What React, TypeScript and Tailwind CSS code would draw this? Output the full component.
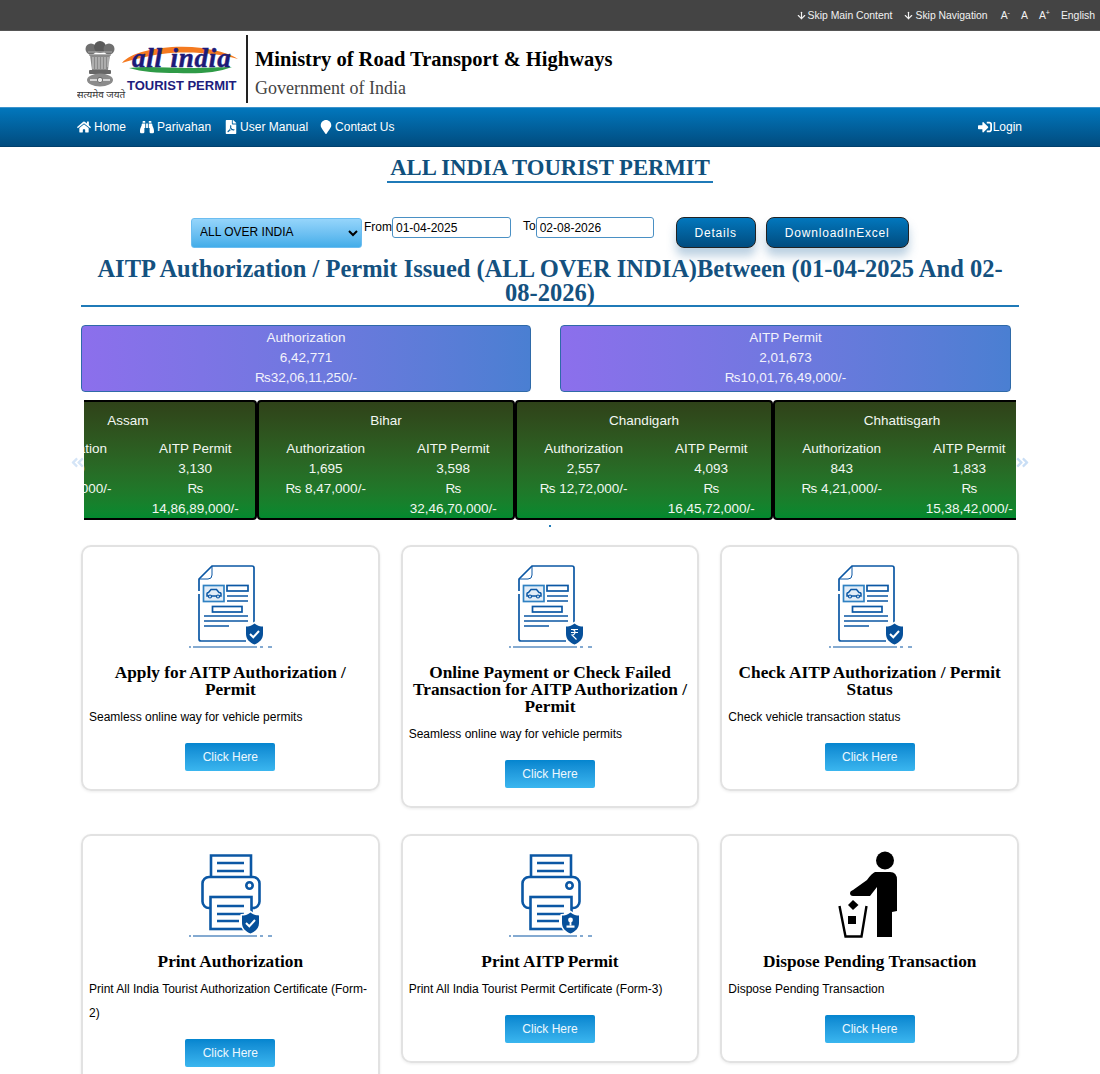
import { FaHome, FaBinoculars, FaFilePdf, FaMapMarker, FaSignInAlt, FaAngleDoubleLeft, FaAngleDoubleRight } from 'react-icons/fa';
import { ArrowDown } from 'lucide-react';

const blue = '#0b57a4';

function Baseline() {
  return (
    <g stroke={blue} strokeWidth="1.2" fill="none">
      <path d="M9 92h2M13 92h64M80 92h3M88 92h4" />
    </g>
  );
}

function Shield({ cx, cy, children }: { cx: number; cy: number; children?: React.ReactNode }) {
  return (
    <g transform={`translate(${cx} ${cy})`}>
      <path d="M0 -10.5C3 -8 6 -7.5 8.5 -7.5V0C8.5 5 5 8.5 0 10.5C-5 8.5 -8.5 5 -8.5 0V-7.5C-6 -7.5 -3 -8 0 -10.5Z" fill="#fff" stroke="#fff" strokeWidth="3" />
      <path d="M0 -10.5C3 -8 6 -7.5 8.5 -7.5V0C8.5 5 5 8.5 0 10.5C-5 8.5 -8.5 5 -8.5 0V-7.5C-6 -7.5 -3 -8 0 -10.5Z" fill="#07509a" />
      {children}
    </g>
  );
}

const Tick = () => <path d="M-4.5 0L-1.2 3.2L4.5 -3" stroke="#fff" strokeWidth="2" fill="none" />;

function DocIcon({ rupee }: { rupee?: boolean }) {
  return (
    <svg width="100" height="100" viewBox="0 0 100 100" className="block mx-auto">
      <g fill="none" stroke={blue} strokeWidth="1.7">
        <path d="M19 36V24L32 11H72Q74 11 74 13V70" />
        <path d="M19 39V84Q19 86 21 86H66" />
        <path d="M32 11V20Q32 24 28 24H19" strokeWidth="1" />
        <rect x="23.5" y="30.5" width="20.5" height="16" fill="#e4eef7" stroke="#2f81c2" strokeWidth="1.7" />
        <rect x="47" y="30.5" width="21" height="5.5" />
        <path d="M47 41h21M47 46h21" />
        <rect x="32.5" y="51.5" width="29.5" height="5.5" />
        <path d="M24 61h44M24 66h44M24 71h25" />
        <path d="M27 41V38.5Q27 37.5 28.5 37.5L31 34.5H36.5L39 37.5Q41 37.5 41 39V41H27Z" strokeWidth="1.5" />
        <circle cx="30" cy="41.5" r="1.5" fill="#e4eef7" strokeWidth="1.2" />
        <circle cx="38" cy="41.5" r="1.5" fill="#e4eef7" strokeWidth="1.2" />
      </g>
      <Shield cx={74.5} cy={79}>
        {rupee ? <path d="M-3.5 -4.5H3.5M-3.5 -1.5H3.5M-2.5 -4.5C1.5 -4.5 1.5 1 -2.5 1L2 5.5" stroke="#fff" strokeWidth="1.1" fill="none" /> : <Tick />}
      </Shield>
      <Baseline />
    </svg>
  );
}

function PrinterIcon({ badge }: { badge: 'tick' | 'stamp' }) {
  return (
    <svg width="100" height="100" viewBox="0 0 100 100" className="block mx-auto">
      <g fill="none" stroke={blue} strokeWidth="2.6">
        <path d="M31 33V11.5H71V33" />
        <path d="M37 19h27M37 27h27" />
        <rect x="22.5" y="33" width="57" height="31" rx="6.5" />
        <circle cx="69.5" cy="41.5" r="3.2" />
        <rect x="30.5" y="53" width="41" height="32" fill="#fff" />
        <path d="M37 62h27M37 70h27M37 77h22" />
      </g>
      <Shield cx={70.5} cy={79}>
        {badge === 'tick' ? (
          <Tick />
        ) : (
          <g fill="#fff">
            <circle cx="0" cy="-3" r="2.4" />
            <rect x="-0.9" y="-2" width="1.8" height="4.5" />
            <rect x="-4" y="2.5" width="8" height="2.2" />
          </g>
        )}
      </Shield>
      <Baseline />
    </svg>
  );
}

function DisposeIcon() {
  return (
    <svg width="100" height="100" viewBox="0 0 100 100" className="block mx-auto">
      <circle cx="65" cy="16.5" r="9" fill="#000" />
      <path d="M55 28H70Q77 28 77 36V67L72 68V93H57V43L50 52H33Q30 52 30 49Q30 47 33 46L47 36Q52 29 55 28Z" fill="#000" />
      <path d="M33 56L38.5 61L33 66L28 61Z" fill="#000" />
      <rect x="28" y="72" width="8" height="8" fill="#000" />
      <path d="M19.5 62L25.5 92.5H41.5L46.5 62" fill="none" stroke="#000" strokeWidth="2.4" />
    </svg>
  );
}

function Logo() {
  return (
    <svg width="169" height="72" viewBox="0 0 169 72" className="block shrink-0">
      <g fill="#6f6f6f">
        <circle cx="14" cy="16" r="5.5" />
        <circle cx="23" cy="14" r="6" fill="#5a5a5a" />
        <circle cx="32" cy="16" r="5.5" />
        <path d="M11 19h24M12 22h22" stroke="#999" strokeWidth="1.5" />
        <path d="M13 22H33L31 37H15Z" fill="#8a8a8a" />
        <path d="M16 24v12M19 24v12M22 24v12M25 24v12M28 24v12M31 24v10" stroke="#d8d8d8" strokeWidth="0.9" />
        <rect x="12" y="37" width="22" height="4" rx="1" fill="#666" />
        <ellipse cx="23" cy="47" rx="13" ry="6.5" fill="#8b8b8b" />
        <path d="M13 47h7M26 47h7" stroke="#eee" strokeWidth="1.5" />
        <circle cx="23" cy="47" r="2.6" fill="#eee" stroke="#555" strokeWidth="0.8" />
      </g>
      <text x="24" y="65" textAnchor="middle" fontSize="10" fill="#333" fontFamily="'Noto Sans','DejaVu Sans',sans-serif">सत्यमेव जयते</text>
      <path d="M45 30C55 18 90 11 125 15C145 18 155 22 161 26C140 20 110 18 85 21C70 23 55 27 45 30Z" fill="#f47a20" />
      <path d="M52 35C70 33 90 35 110 35C130 35 145 34 155 34C140 40 120 41 100 40C80 40 65 39 52 35Z" fill="#2f9b47" />
      <text x="55" y="34" fontSize="27" fontWeight="bold" fontStyle="italic" fill="#1d1a78" stroke="#1d1a78" strokeWidth="0.5" letterSpacing="0.8" fontFamily="'Liberation Serif',serif">all india</text>
      <text x="50" y="57" fontSize="13" fontWeight="bold" fill="#201c7c" fontFamily="'Liberation Sans',sans-serif">TOURIST PERMIT</text>
    </svg>
  );
}

const states = [
  { name: 'Assam', a: '2,980', aAmt: '14,90,000/-', p: '3,130', pAmt: '14,86,89,000/-' },
  { name: 'Bihar', a: '1,695', aAmt: '8,47,000/-', p: '3,598', pAmt: '32,46,70,000/-' },
  { name: 'Chandigarh', a: '2,557', aAmt: '12,72,000/-', p: '4,093', pAmt: '16,45,72,000/-' },
  { name: 'Chhattisgarh', a: '843', aAmt: '4,21,000/-', p: '1,833', pAmt: '15,38,42,000/-' },
];

function StateCard({ s }: { s: (typeof states)[number] }) {
  return (
    <div className="w-[258px] shrink-0 h-[120px] rounded-[4px] border-2 border-black bg-gradient-to-b from-[#2f4219] to-[#028a2f] text-[13.5px] leading-[20px] text-[#f2f7f2] text-center">
      <div className="pt-[9px] h-[37px]">{s.name}</div>
      <div className="flex pl-[3px]">
        <div className="w-[128px]">
          <div>Authorization</div>
          <div>{s.a}</div>
          <div>₨ {s.aAmt}</div>
        </div>
        <div className="w-[120px] ml-[4px]">
          <div>AITP Permit</div>
          <div>{s.p}</div>
          <div>₨</div>
          <div>{s.pAmt}</div>
        </div>
      </div>
    </div>
  );
}

function Summary({ title, count, amount }: { title: string; count: string; amount: string }) {
  return (
    <div className="h-[67px] rounded-[4px] border border-[#2f6aa8] bg-gradient-to-r from-[#8c6fec] to-[#4a7fd2] pt-[2px] text-center text-[13.5px] leading-[20px] text-[#f2f2fb]">
      <div>{title}</div>
      <div>{count}</div>
      <div>₨{amount}</div>
    </div>
  );
}

function ServiceCard({ icon, title, text }: { icon: React.ReactNode; title: string; text: string }) {
  return (
    <div className="rounded-[10px] border-2 border-[#e2e2e2] px-[6px] pt-[8px] pb-[18px] shadow-[0_1px_3px_rgba(0,0,0,0.08)]">
      {icon}
      <h3 className="mt-[9px] font-['Liberation_Serif',serif] text-[17.3px] leading-[17px] font-bold text-black text-center">{title}</h3>
      <p className="mt-[7px] text-[12px] leading-[24px] text-black">{text}</p>
      <button className="block mx-auto mt-[14px] w-[90px] h-[28px] rounded-[2px] bg-gradient-to-b from-[#0485cf] to-[#3ab6ef] text-[12px] text-[#eef8fe]">Click Here</button>
    </div>
  );
}

const navItems = [
  { label: 'Home', Icon: FaHome, cls: 'gap-[3px]' },
  { label: 'Parivahan', Icon: FaBinoculars, cls: 'ml-[14px] gap-[3px]' },
  { label: 'User Manual', Icon: FaFilePdf, cls: 'ml-[13px] gap-[2px]' },
  { label: 'Contact Us', Icon: FaMapMarker, cls: 'ml-[11px] gap-[2px]' },
];

export default function App() {
  return (
    <div className="h-[1074px] overflow-hidden bg-white font-['Liberation_Sans',Arial,sans-serif]">
      {/* top strip */}
      <div className="h-[31px] pt-[1px] bg-[#444444] border-b border-[#555] flex items-center justify-end pr-[5px] gap-[11px] text-[10.4px] text-[#f2f2f2]">
        <span className="flex items-center gap-[1px]"><ArrowDown size={11} strokeWidth={2.5} />Skip Main Content</span>
        <span className="flex items-center gap-[1px]"><ArrowDown size={11} strokeWidth={2.5} />Skip Navigation</span>
        <span className="ml-[2px]">A<sup className="text-[7px]">-</sup></span>
        <span>A</span>
        <span>A<sup className="text-[7px]">+</sup></span>
        <span>English</span>
      </div>

      {/* header */}
      <div className="h-[76px] pl-[77px] flex items-center">
        <Logo />
        <div className="w-[2px] h-[68px] bg-[#222]" />
        <div className="pl-[7px] pt-[8px] font-['Liberation_Serif',serif]">
          <div className="text-[20.5px] leading-[24px] font-bold text-black">Ministry of Road Transport &amp; Highways</div>
          <div className="mt-[5px] text-[18px] leading-[24px] text-[#444]">Government of India</div>
        </div>
      </div>

      {/* nav */}
      <div className="h-[40px] border-t border-[#3d93cc] border-b-[#01406d] border-b bg-gradient-to-b from-[#0277bd] to-[#014c7f] flex items-center justify-between pl-[77px] pr-[78px] text-[12px] text-white">
        <div className="flex">
          {navItems.map(({ label, Icon, cls }) => (
            <span key={label} className={`flex items-center ${cls}`}><Icon size={14} />{label}</span>
          ))}
        </div>
        <span className="flex items-center gap-[1px]"><FaSignInAlt size={14} />Login</span>
      </div>

      {/* page title */}
      <div className="flex justify-center pt-[8px]">
        <h1 className="px-[3px] border-b-2 border-[#1f7ab8] font-['Liberation_Serif',serif] text-[22.7px] leading-[26px] font-bold text-[#10507c]">ALL INDIA TOURIST PERMIT</h1>
      </div>

      {/* filter row */}
      <div className="mt-[34px] pl-[191px] flex items-start h-[31px] text-[12px] text-black">
        <select className="mt-[1px] w-[171px] h-[30px] rounded-[3px] border border-[#6cbdf0] bg-gradient-to-b from-[#95d5fb] to-[#42ade9] pl-[4px] pb-[2px] text-[12px] text-black outline-none">
          <option>ALL OVER INDIA</option>
        </select>
        <span className="ml-[2px] mt-[1px]">From</span>
        <input readOnly value="01-04-2025" className="w-[119px] h-[21px] rounded-[3px] border border-[#4a90c4] px-[3px] text-[12px]" />
        <span className="ml-[12px]">To</span>
        <input readOnly value="02-08-2026" className="w-[118px] h-[21px] rounded-[3px] border border-[#4a90c4] px-[3px] text-[12px]" />
        <button className="ml-[22px] w-[80px] h-[31px] rounded-[8px] border border-[#222] bg-gradient-to-b from-[#0277bd] to-[#014c7f] text-[12px] tracking-[0.8px] text-white shadow-[0_8px_10px_rgba(60,120,170,0.35)]">Details</button>
        <button className="ml-[10px] w-[143px] h-[31px] rounded-[8px] border border-[#222] bg-gradient-to-b from-[#0277bd] to-[#014c7f] text-[12px] tracking-[0.8px] text-white shadow-[0_8px_10px_rgba(60,120,170,0.35)]">DownloadInExcel</button>
      </div>

      {/* section heading */}
      <div className="mx-[81px] mt-[9px] px-[10px] border-b-2 border-[#1f7ab8]">
        <h2 className="font-['Liberation_Serif',serif] text-[24.5px] leading-[24px] font-bold text-[#14517f] text-center">AITP Authorization / Permit Issued (ALL OVER INDIA)Between (01-04-2025 And 02-08-2026)</h2>
      </div>

      {/* totals */}
      <div className="mt-[18px] ml-[81px] flex gap-[29px]">
        <div className="w-[450px]"><Summary title="Authorization" count="6,42,771" amount="32,06,11,250/-" /></div>
        <div className="w-[451px]"><Summary title="AITP Permit" count="2,01,673" amount="10,01,76,49,000/-" /></div>
      </div>

      {/* state carousel */}
      <div className="relative mt-[8px] mx-[70px] px-[14px]">
        <div className="overflow-hidden">
          <div className="flex ml-[-85px]">
            {states.map((s) => <StateCard key={s.name} s={s} />)}
          </div>
        </div>
        <FaAngleDoubleLeft size={15} className="absolute left-0 top-[55px] text-[#d5e5f7]" />
        <FaAngleDoubleRight size={15} className="absolute right-0 top-[55px] text-[#c9def5]" />
        <div className="absolute left-[479px] top-[125px] w-[2px] h-[2px] bg-[#1f7ab8]" />
      </div>

      {/* service cards */}
      <div className="mt-[25px] mx-[81px] grid grid-cols-3 gap-x-[21px] gap-y-[26px] items-start">
        <ServiceCard icon={<DocIcon />} title="Apply for AITP Authorization / Permit" text="Seamless online way for vehicle permits" />
        <ServiceCard icon={<DocIcon rupee />} title="Online Payment or Check Failed Transaction for AITP Authorization / Permit" text="Seamless online way for vehicle permits" />
        <ServiceCard icon={<DocIcon />} title="Check AITP Authorization / Permit Status" text="Check vehicle transaction status" />
        <ServiceCard icon={<PrinterIcon badge="tick" />} title="Print Authorization" text="Print All India Tourist Authorization Certificate (Form-2)" />
        <ServiceCard icon={<PrinterIcon badge="stamp" />} title="Print AITP Permit" text="Print All India Tourist Permit Certificate (Form-3)" />
        <ServiceCard icon={<DisposeIcon />} title="Dispose Pending Transaction" text="Dispose Pending Transaction" />
      </div>
    </div>
  );
}
